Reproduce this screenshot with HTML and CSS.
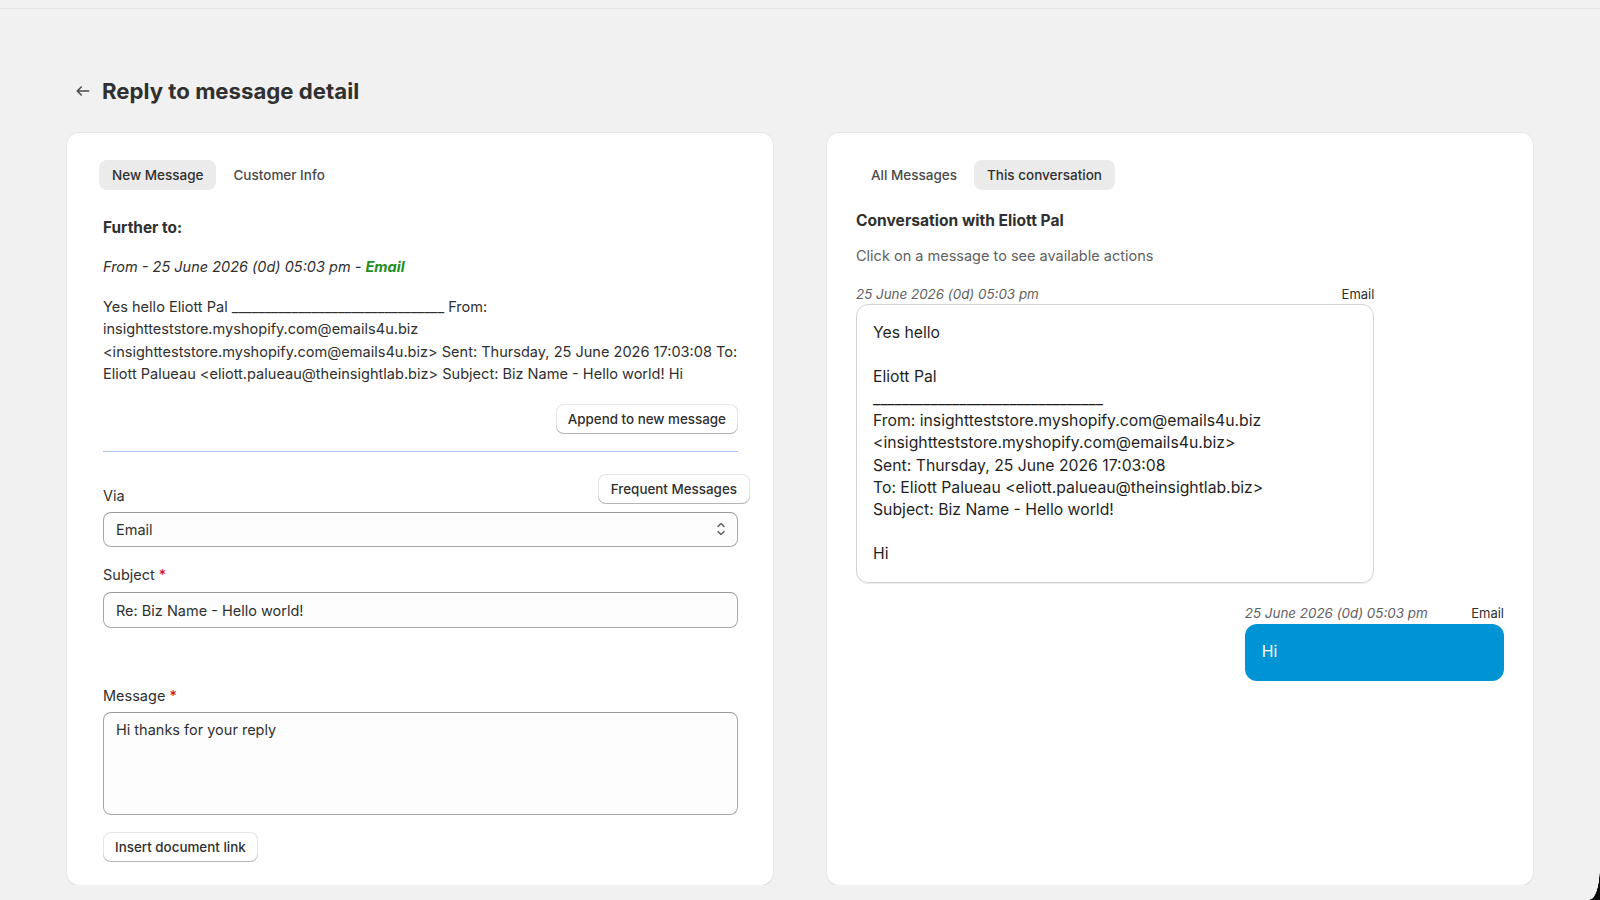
FILE: index.html
```html
<!DOCTYPE html>
<html lang="en">
<head>
<meta charset="utf-8">
<title>Reply to message detail</title>
<link rel="stylesheet" href="styles.css">
</head>
<body>
<div class="topstrip"></div>
<main class="page">
  <header class="page-header">
    <button class="back" aria-label="Back">
      <svg viewBox="0 0 20 20" width="20" height="20"><path fill="#4a4a4a" d="M16.5 10a.75.75 0 0 1-.75.75h-9.690l2.72 2.72a.75.75 0 0 1-1.06 1.06l-4-4a.75.75 0 0 1 0-1.06l4-4a.75.75 0 0 1 1.06 1.06l-2.72 2.72h9.69a.75.75 0 0 1 .75.75Z"/></svg>
    </button>
    <h1 class="title">Reply to message detail</h1>
  </header>

  <div class="columns">
    <section class="card card-left">
      <div class="tabs">
        <span class="tab active">New Message</span>
        <span class="tab">Customer Info</span>
      </div>

      <h2 class="heading further">Further to:</h2>
      <p class="meta-line"><em>From - 25 June 2026 (0d) 05:03 pm - <strong class="green">Email</strong></em></p>
      <p class="quoted">Yes hello Eliott Pal ________________________________ From: insightteststore.myshopify.com@emails4u.biz &lt;insightteststore.myshopify.com@emails4u.biz&gt; Sent: Thursday, 25 June 2026 17:03:08 To: Eliott Palueau &lt;eliott.palueau@theinsightlab.biz&gt; Subject: Biz Name - Hello world! Hi</p>
      <div class="append-row">
        <button class="btn">Append to new message</button>
      </div>
      <hr class="divider">

      <div class="via-row">
        <label class="label">Via</label>
        <button class="btn btn-freq">Frequent Messages</button>
      </div>
      <div class="field select">
        <span>Email</span>
        <svg viewBox="0 0 20 20" width="20" height="20"><path fill="#616161" d="M10.884 4.323a1.25 1.25 0 0 0-1.768 0l-2.646 2.647a.75.75 0 0 0 1.06 1.06l2.47-2.470 2.47 2.470a.75.75 0 1 0 1.06-1.06l-2.646-2.647Z"/><path fill="#616161" d="m13.53 13.03-2.646 2.647a1.25 1.25 0 0 1-1.768 0l-2.646-2.647a.75.75 0 0 1 1.06-1.06l2.47 2.47 2.47-2.47a.75.75 0 0 1 1.06 1.06Z"/></svg>
      </div>

      <label class="label label-subject">Subject <span class="req">*</span></label>
      <div class="field input">Re: Biz Name - Hello world!</div>

      <label class="label label-message">Message <span class="req">*</span></label>
      <div class="field textarea">Hi thanks for your reply</div>

      <div class="insert-row">
        <button class="btn">Insert document link</button>
      </div>
    </section>

    <section class="card card-right">
      <div class="tabs">
        <span class="tab">All Messages</span>
        <span class="tab active">This conversation</span>
      </div>

      <h2 class="heading conv">Conversation with Eliott Pal</h2>
      <p class="hint">Click on a message to see available actions</p>

      <div class="msg msg-in">
        <div class="msg-meta"><em>25 June 2026 (0d) 05:03 pm</em><span>Email</span></div>
        <div class="msg-box">Yes hello<br><br>Eliott Pal<br>________________________________<br>From: insightteststore.myshopify.com@emails4u.biz<br>&lt;insightteststore.myshopify.com@emails4u.biz&gt;<br>Sent: Thursday, 25 June 2026 17:03:08<br>To: Eliott Palueau &lt;eliott.palueau@theinsightlab.biz&gt;<br>Subject: Biz Name - Hello world!<br><br>Hi</div>
      </div>

      <div class="msg msg-out">
        <div class="msg-meta"><em>25 June 2026 (0d) 05:03 pm</em><span>Email</span></div>
        <div class="msg-bubble">Hi</div>
      </div>
    </section>
  </div>
</main>
<div class="screen-corner"></div>
</body>
</html>
```

FILE: styles.css
```css
* { box-sizing: border-box; }

html, body {
  margin: 0;
  padding: 0;
  background: #f1f1f1;
  font-family: Inter, "Noto Sans", "Liberation Sans", sans-serif;
  color: #303030;
  font-size: 13px;
}

.topstrip {
  height: 9px;
  border-bottom: 1px solid #e6e6e6;
  background: #f1f1f1;
}

.page {
  padding: 0 67px;
}

.page-header {
  display: flex;
  align-items: center;
  gap: 8px;
  height: 24px;
  margin-top: 70px;
  margin-left: 5px;
}

.back {
  border: 0;
  background: none;
  padding: 0;
  width: 22px;
  height: 22px;
  display: flex;
  align-items: center;
  justify-content: center;
}

.title {
  margin: 0;
  font-size: 22.2px;
  line-height: 24px;
  font-weight: 700;
  color: #303030;
}

.columns {
  display: grid;
  grid-template-columns: 1fr 1fr;
  gap: 54px;
  margin-top: 30px;
}

.card {
  background: #fff;
  border-radius: 12px;
  box-shadow: 0 1px 0 0 rgba(26,26,26,0.07), 0 0 0 1px rgba(0,0,0,0.04);
  height: 752px;
  display: flex;
  flex-direction: column;
}

.card-left { padding: 27px 35px 23px 36px; }
.card-right { padding: 27px 29px 0 29px; }

.tabs {
  display: flex;
  gap: 4px;
  height: 30px;
}
.card-left .tabs { margin-left: -4px; }
.card-right .tabs { margin-left: 2px; }

.tab {
  display: flex;
  align-items: center;
  padding: 0 13px;
  border-radius: 8px;
  font-size: 13.5px;
  font-weight: 500;
  color: #4a4a4a;
}
.tab.active {
  background: #ebebeb;
  color: #303030;
}

.heading {
  margin: 0;
  font-weight: 650;
  line-height: 20px;
  color: #303030;
}

.further { margin-top: 28px; font-size: 15.4px; }

.meta-line {
  margin: 18px 0 0;
  line-height: 22px;
  font-size: 14.5px;
  color: #303030;
}
.green { color: #1f8f1f; font-weight: 700; }

.quoted {
  margin: 18px 0 0;
  font-size: 14.55px;
  line-height: 22.4px;
  color: #303030;
  word-wrap: break-word;
}

.append-row {
  display: flex;
  justify-content: flex-end;
  margin-top: 18px;
}

.btn {
  font-family: inherit;
  font-size: 13.4px;
  font-weight: 550;
  color: #303030;
  background: #fff;
  border: 0;
  border-radius: 8px;
  height: 30px;
  padding: 0 12px;
  box-shadow: inset 0 -1px 0 0 #b5b5b5, inset 0 0 0 1px rgba(0,0,0,0.1), inset 0 0.5px 0 1.5px #fff;
}
.btn-freq { padding: 0 13px; }

.divider {
  border: 0;
  border-top: 1px solid #abc4f3;
  margin: 17px 0 0;
}

.via-row {
  display: flex;
  justify-content: space-between;
  align-items: flex-end;
  margin-top: 22px;
  margin-right: -12px;
}

.label {
  display: block;
  font-size: 14.5px;
  line-height: 20px;
  color: #303030;
}
.via-row .label { margin-bottom: -2px; }
.req { color: #c70a24; }

.field {
  border: 1px solid #a8a8a8;
  border-top-color: #999;
  border-radius: 8px;
  background: #fdfdfd;
  font-size: 14.5px;
  color: #303030;
  padding: 0 12px;
}

.select {
  margin-top: 8px;
  height: 36px;
  display: flex;
  align-items: center;
  justify-content: space-between;
  padding-right: 6px;
}

.label-subject { margin-top: 18px; }

.input {
  margin-top: 7px;
  height: 36px;
  display: flex;
  align-items: center;
}

.label-message { margin-top: 58px; }

.textarea {
  margin-top: 6px;
  height: 103px;
  padding-top: 7px;
  line-height: 20px;
}

.insert-row {
  margin-top: 17px;
  display: flex;
}

/* right side */
.conv { margin-top: 21px; font-size: 15.6px; }

.hint {
  margin: 15px 0 0;
  font-size: 14.5px;
  line-height: 20px;
  color: #616161;
}

.msg { display: flex; flex-direction: column; }
.msg-in { width: 80%; margin-top: 19px; }
.msg-out { width: 40%; margin-left: auto; margin-top: 21px; }

.msg-meta {
  display: flex;
  justify-content: space-between;
  font-size: 13.4px;
  line-height: 18px;
  color: #303030;
}
.msg-meta span { font-size: 13px; }
.msg-meta em { color: #616161; }

.msg-box {
  margin-top: 1px;
  border: 1px solid #d4d4d4;
  border-radius: 12px;
  box-shadow: 0 1px 0 0 rgba(0,0,0,0.08);
  padding: 17px 16px 17px 16px;
  font-size: 15.75px;
  line-height: 22.1px;
  color: #1f1f1f;
}

.msg-bubble {
  margin-top: 2px;
  background: #0094d4;
  border-radius: 12px;
  color: #fff;
  font-size: 15.75px;
  line-height: 22px;
  padding: 17px 17px 18px;
  height: 57px;
}

.screen-corner {
  position: fixed;
  right: 0;
  bottom: 0;
  width: 10px;
  height: 32px;
  background: radial-gradient(ellipse 10px 32px at 0 0, transparent 96%, #0a0a0a 100%);
}
```
